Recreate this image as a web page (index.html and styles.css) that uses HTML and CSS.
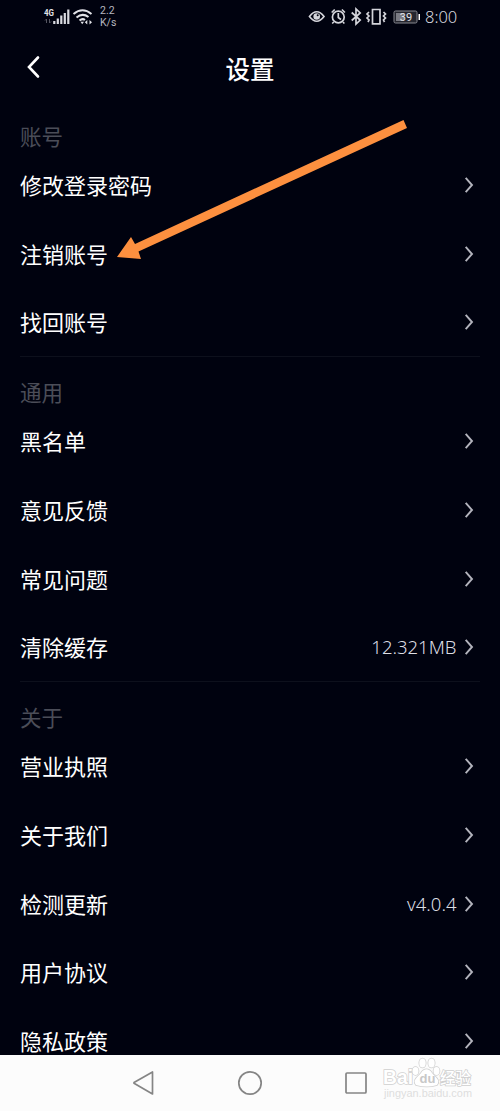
FILE: index.html
```html
<!DOCTYPE html>
<html lang="zh-CN">
<head>
<meta charset="utf-8">
<title>设置</title>
<link rel="stylesheet" href="styles.css">
</head>
<body>
<svg class="defs" width="0" height="0"><symbol id="chev" viewBox="0 0 10 18"><path d="M1.7 1.8 8 9 1.7 16.2" fill="none" stroke="currentColor" stroke-width="1.9"/></symbol></svg>
<div class="phone">
  <div class="status">
    <svg class="signal" width="52" height="22" viewBox="0 0 52 22">
      <text class="net" x="1" y="11" textLength="10" lengthAdjust="spacingAndGlyphs">4G</text>
      <path d="M3.500 14v4M2 15.500l1.500-1.500M6.500 14v4M8 16.500L6.500 18" stroke="#555661" fill="none"/>
      <path d="M11.300 16v3M14.800 13.500V19M18.300 10.500V19M21.800 8V19M25.300 4.500V19" stroke="#d9dae0" stroke-width="2.200"/>
      <g fill="none" stroke="#e2e3e8" stroke-width="2"><path d="M30.500 9Q39.500 1.500 48.500 9M33.500 12.500Q39.500 7.500 45.500 12M36.500 15.500Q39.500 13 42 15"/></g>
      <path d="M37.500 16.800h3.500l-1.800 2.500zM41.800 17.200l2.500-2.200v4.500zM49 17.200l-2.500-2.200v4.500z" fill="#e2e3e8"/>
    </svg>
    <div class="speed"><span>2.2</span><span>K/s</span></div>
    <svg class="sys" width="114" height="22" viewBox="0 0 114 22">
      <g fill="none" stroke="#d4d5db" stroke-width="1.7">
        <path d="M1.500 11.500Q8.700 2 16 11.500Q8.700 21 1.500 11.500z"/>
        <circle cx="30.300" cy="12" r="5.900"/><path d="M30.300 8v4.500l2.700 2M23.700 7.500l3-3M33.900 4.500l3 3M25.700 17l-1.500 1.500M34.900 17l1.500 1.500"/>
        <path d="M43.700 7.500l8.500 7.500-4.200 4V4l4.200 4-8.500 7.500"/>
        <path d="M64.500 4.500h7.500v14.300h-7.500z"/><path d="M61 7l-2 2 2 2-2 2 2 2-1 2M75.500 7l2 2-2 2 2 2-2 2 1 2" stroke-width="1.700"/>
      </g>
      <circle cx="8.700" cy="11.500" r="3.300" fill="#d4d5db"/><circle cx="9.700" cy="10.300" r="1" fill="#00020f"/>
      <rect x="86" y="6" width="23" height="12" rx="1.500" fill="#25262f" stroke="#888991"/>
      <path d="M88 8h8v8h-8z" fill="#7b7c84"/><path d="M110.500 9h1.500v6h-1.500z" fill="#fff"/>
      <text class="battery" x="98" y="16" text-anchor="middle">39</text>
    </svg>
    <span class="time">8:00</span>
  </div>
  <header class="header">
    <svg class="back" width="14" height="24" viewBox="0 0 14 24"><path d="M12 2.500 3 12l9 9.500" fill="none" stroke="#fff" stroke-width="2.600" stroke-linecap="round"/></svg>
    <h1>设置</h1>
  </header>
  <main class="list">
    <section>
      <h2>账号</h2>
      <div class="row"><span>修改登录密码</span><svg class="chev"><use href="#chev"/></svg></div>
      <div class="row"><span>注销账号</span><svg class="chev"><use href="#chev"/></svg></div>
      <div class="row"><span>找回账号</span><svg class="chev"><use href="#chev"/></svg></div>
    </section>
    <section>
      <h2>通用</h2>
      <div class="row"><span>黑名单</span><svg class="chev"><use href="#chev"/></svg></div>
      <div class="row"><span>意见反馈</span><svg class="chev"><use href="#chev"/></svg></div>
      <div class="row"><span>常见问题</span><svg class="chev"><use href="#chev"/></svg></div>
      <div class="row"><span>清除缓存</span><span class="value">12.321MB</span><svg class="chev"><use href="#chev"/></svg></div>
    </section>
    <section>
      <h2>关于</h2>
      <div class="row"><span>营业执照</span><svg class="chev"><use href="#chev"/></svg></div>
      <div class="row"><span>关于我们</span><svg class="chev"><use href="#chev"/></svg></div>
      <div class="row"><span>检测更新</span><span class="value">v4.0.4</span><svg class="chev"><use href="#chev"/></svg></div>
      <div class="row"><span>用户协议</span><svg class="chev"><use href="#chev"/></svg></div>
      <div class="row"><span>隐私政策</span><svg class="chev"><use href="#chev"/></svg></div>
    </section>
  </main>
  <nav class="nav">
    <svg width="24" height="28" viewBox="0 0 24 28"><path d="M20.500 3v22L2 14.200v-.6z"/></svg>
    <svg width="28" height="28" viewBox="0 0 28 28"><circle cx="14" cy="14" r="11.200"/></svg>
    <svg width="24" height="28" viewBox="0 0 24 28"><rect x="2" y="4" width="20" height="20" rx="1"/></svg>
  </nav>
  <svg class="arrow" width="300" height="150" viewBox="0 0 300 150"><path d="M17 144 31 124 35 131 303.500 7 307 15 38.500 138.500 41 146z" fill="#fd903f"/></svg>
  <svg class="watermark" width="100" height="50" viewBox="0 0 100 50">
    <g class="wm-outline">
      <text class="wm-main" x="3" y="28" textLength="30" lengthAdjust="spacingAndGlyphs">Bai</text>
      <path d="M36 29c-4-5 2-8 5-12 3-5 8-5 11 0 3 4 9 7 5 12q-10 3-21 0z"/>
      <ellipse cx="35.500" cy="15" rx="3" ry="4"/><ellipse cx="42.500" cy="7" rx="3.200" ry="4.500"/><ellipse cx="51.500" cy="7" rx="3.200" ry="4.500"/><ellipse cx="56.500" cy="15" rx="3" ry="4"/>
      <text class="wm-cn" x="60" y="27.500" textLength="31" lengthAdjust="spacingAndGlyphs">经验</text>
    </g>
    <text class="wm-du" x="39.500" y="27">du</text>
    <text class="wm-url" x="4" y="41" textLength="88" lengthAdjust="spacingAndGlyphs">jingyan.baidu.com</text>
  </svg>
</div>
</body>
</html>
```
FILE: styles.css
```css
* { box-sizing: border-box; }
body { margin: 0; background: #00020f; color: #fff; font-family: "Noto Sans CJK SC", sans-serif; }
.defs { position: absolute; }
.phone { position: relative; width: 500px; height: 1111px; overflow: hidden; display: flex; flex-direction: column; }
.status { height: 36px; flex: none; display: flex; align-items: flex-start; padding: 5px 0 0 43px; }
.net { font: bold 9px Roboto, sans-serif; fill: #e2e3e8; }
.speed { display: flex; flex-direction: column; margin-left: 5px; width: 20px; font: 10.5px/12px Roboto, sans-serif; color: #b5b6bf; }
.sys { margin-left: 188px; flex: none; }
.battery { font: 11px Roboto, sans-serif; fill: #e2e3e8; }
.time { margin-left: 3px; font: 300 16.500px/24px "Noto Sans", sans-serif; color: #d5d6dd; }
.header { height: 64.600px; flex: none; display: flex; align-items: center; justify-content: center; position: relative; }
.back { position: absolute; left: 26px; top: 19px; }
h1 { margin: 0; padding-top: 1px; font-size: 24.500px; line-height: 36px; font-weight: 500; }
.list { height: 954.600px; flex: none; overflow: hidden; }
section { border-bottom: 1px solid #0d101c; margin: 0 20px; }
section:last-child { border-bottom: 0; }
h2 { margin: 0; height: 50px; padding-top: 20px; font-size: 21.500px; line-height: 30px; font-weight: 400; color: #4b4d58; }
.row { height: 68.750px; display: flex; align-items: center; font-size: 22px; line-height: 26px; }
.row > span:first-child { padding-bottom: 2px; }
.row:last-child { height: 67.750px; }
.chev { width: 10px; height: 18px; margin-left: auto; margin-right: 6px; color: #b3b4bd; }
.value { margin-left: auto; font: 300 18.500px/32px "Noto Sans", sans-serif; color: #dddee4; }
.value + .chev { margin-left: 7.500px; }
.nav { flex: 1; background: #fcfcfc; display: flex; justify-content: space-between; padding: 14px 132px 0; }
.nav svg { fill: none; stroke: #858585; stroke-width: 1.700; stroke-linejoin: round; }
.arrow { position: absolute; left: 100px; top: 113px; overflow: visible; }
.watermark { position: absolute; left: 380px; top: 1056px; }
.wm-outline { fill: #fff; stroke: #d0d0d0; stroke-width: 1.6px; paint-order: stroke; }
.wm-main { font: bold 20px "Liberation Sans", sans-serif; }
.wm-du { font: bold 13px "Liberation Sans", sans-serif; fill: #c8c8c8; }
.wm-cn { font: 500 16px "Noto Sans CJK SC", sans-serif; }
.wm-url { font: 11px "Liberation Sans", sans-serif; fill: #dedede; }
```
